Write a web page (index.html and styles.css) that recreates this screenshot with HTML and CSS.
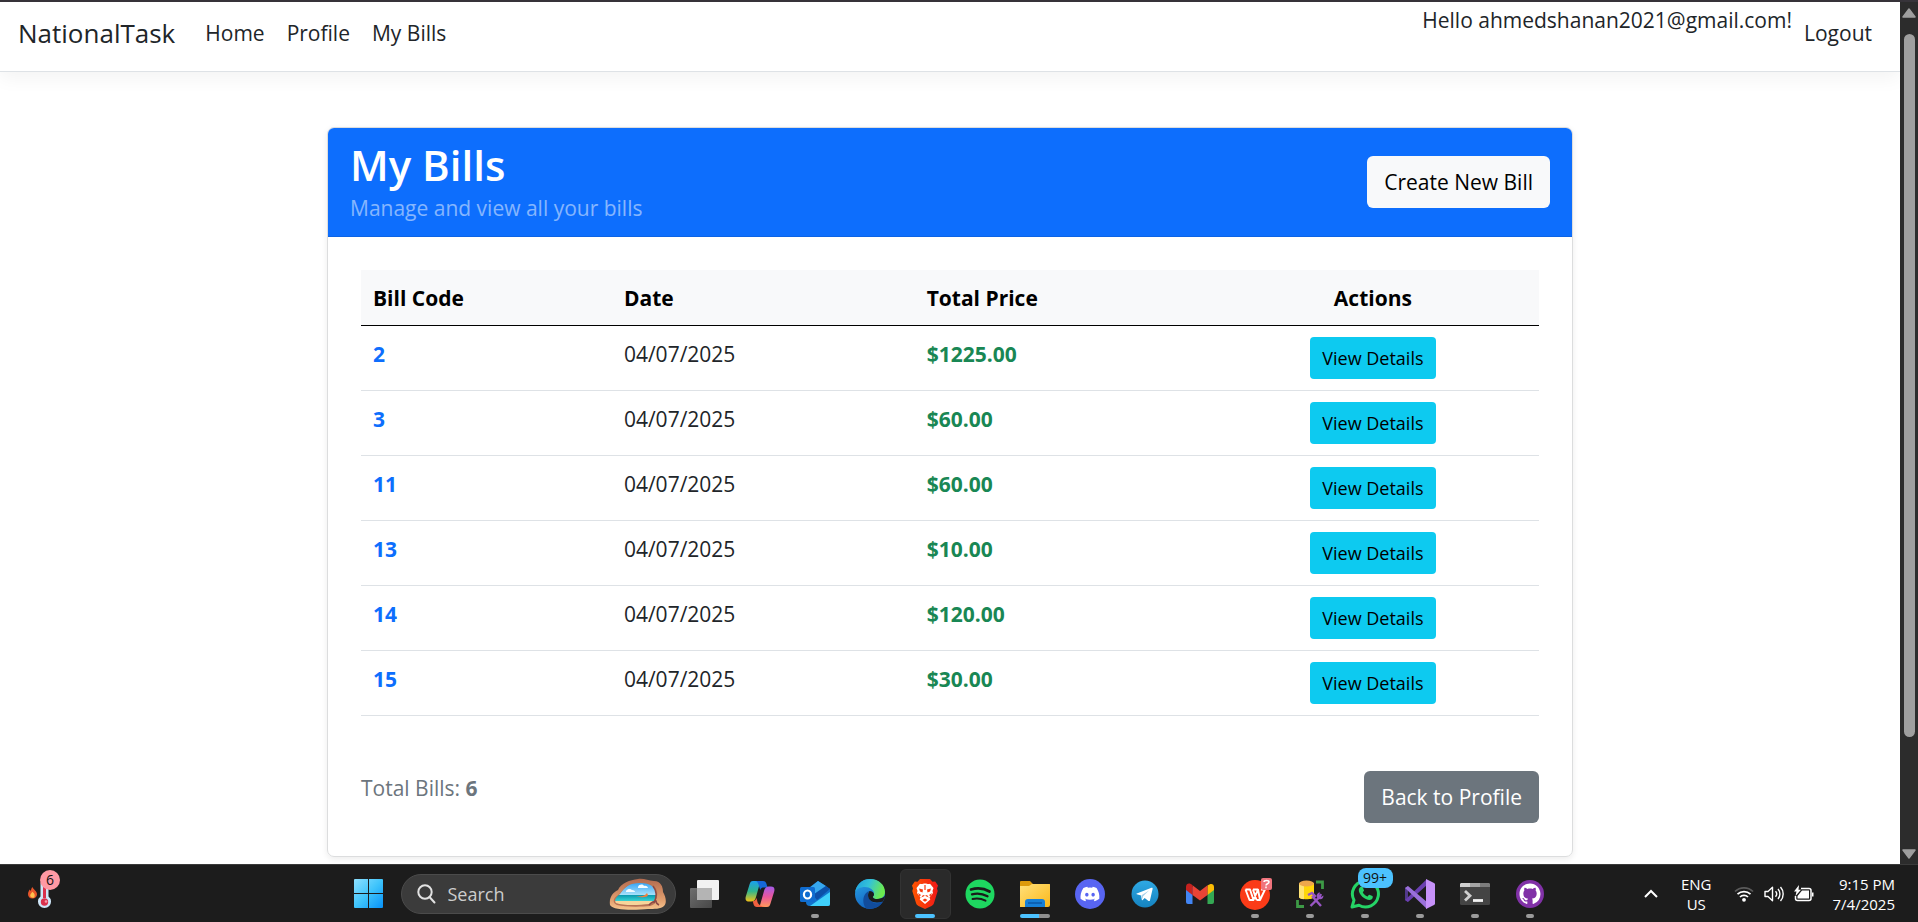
FILE: index.html
```html
<!DOCTYPE html>
<html lang="en">
<head>
<meta charset="utf-8">
<title>My Bills - NationalTask</title>
<link rel="stylesheet" href="styles.css">
</head>
<body>
<div class="viewport">
  <div class="page">
    <header class="navbar">
      <a class="brand" href="#">NationalTask</a>
      <nav class="nav-main">
        <a class="nav-link" href="#">Home</a>
        <a class="nav-link" href="#">Profile</a>
        <a class="nav-link" href="#">My Bills</a>
      </nav>
      <div class="nav-user">
        <span class="hello">Hello ahmedshanan2021@gmail.com!</span>
        <button class="nav-link logout" type="button">Logout</button>
      </div>
    </header>
    <main class="main">
      <section class="card">
        <div class="card-header">
          <div>
            <h1 class="card-title">My Bills</h1>
            <p class="card-subtitle">Manage and view all your bills</p>
          </div>
          <a class="btn btn-light" href="#">Create New Bill</a>
        </div>
        <div class="card-body">
          <table class="bills">
            <colgroup><col class="col-code"><col class="col-date"><col class="col-price"><col class="col-actions"></colgroup>
            <thead>
              <tr><th>Bill Code</th><th>Date</th><th>Total Price</th><th class="center">Actions</th></tr>
            </thead>
            <tbody>
              <tr><td class="code">2</td><td>04/07/2025</td><td class="price">$1225.00</td><td class="center"><a class="btn-info" href="#">View Details</a></td></tr>
              <tr><td class="code">3</td><td>04/07/2025</td><td class="price">$60.00</td><td class="center"><a class="btn-info" href="#">View Details</a></td></tr>
              <tr><td class="code">11</td><td>04/07/2025</td><td class="price">$60.00</td><td class="center"><a class="btn-info" href="#">View Details</a></td></tr>
              <tr><td class="code">13</td><td>04/07/2025</td><td class="price">$10.00</td><td class="center"><a class="btn-info" href="#">View Details</a></td></tr>
              <tr><td class="code">14</td><td>04/07/2025</td><td class="price">$120.00</td><td class="center"><a class="btn-info" href="#">View Details</a></td></tr>
              <tr><td class="code">15</td><td>04/07/2025</td><td class="price">$30.00</td><td class="center"><a class="btn-info" href="#">View Details</a></td></tr>
            </tbody>
          </table>
          <div class="card-foot">
            <p class="total">Total Bills: <strong>6</strong></p>
            <a class="btn btn-secondary" href="#">Back to Profile</a>
          </div>
        </div>
      </section>
    </main>
  </div>
  <div class="scrollbar" aria-hidden="true">
    <svg class="scroll-arrow" viewBox="0 0 14 10"><path d="M7 1 L13 9 H1 Z" fill="#9f9f9f" stroke="#9f9f9f" stroke-width="1.5" stroke-linejoin="round"/></svg>
    <div class="scroll-track"><div class="scroll-thumb"></div></div>
    <svg class="scroll-arrow" viewBox="0 0 14 10"><path d="M7 9 L13 1 H1 Z" fill="#9f9f9f" stroke="#9f9f9f" stroke-width="1.5" stroke-linejoin="round"/></svg>
  </div>
</div>

<footer class="taskbar">
  <div class="task-left">
    <button class="weather" type="button" aria-label="Weather">
      <svg width="26" height="30" viewBox="0 0 26 30">
        <path d="M4.500 19.500C1.500 19.500 0 17.500 0 15c0-2 1.200-3 1.500-4.500.8.500 1 1 1.200 1.600C3.200 10.500 3.500 9 4.500 8c.2 2 4.500 4 4.500 7.200 0 2.600-1.800 4.300-4.500 4.300z" fill="#e8562a"/>
        <path d="M4.800 18.800c-1.700 0-2.600-1-2.600-2.500s1.400-1.800 2-3.600c1.300 1 2.500 2 2.500 3.700 0 1.500-.6 2.400-1.900 2.400z" fill="#ffc04d"/>
        <path d="M12.500 5a4 4 0 0 1 8 0v12.500a6.500 6.500 0 1 1-8 0z" fill="#cfe6f8"/>
        <path d="M15 8h3v11h-3z" fill="#d9304c"/><circle cx="16.500" cy="23" r="3.700" fill="#d9304c"/><circle cx="18" cy="22.500" r="1.300" fill="#f79aa8"/>
      </svg>
      <span class="badge badge-pink">6</span>
    </button>
  </div>

  <div class="task-center">
    <button class="app" type="button" aria-label="Start">
      <svg width="29" height="29" viewBox="0 0 29 29"><defs><linearGradient id="win" x1="0" y1="0" x2="1" y2="1"><stop offset="0" stop-color="#8fe0ff"/><stop offset=".5" stop-color="#3fc4fb"/><stop offset="1" stop-color="#0791f8"/></linearGradient></defs><path fill="url(#win)" d="M1 0h13v14H0V1a1 1 0 0 1 1-1zM15 0h13a1 1 0 0 1 1 1v13H15zM0 15h14v14H1a1 1 0 0 1-1-1zM15 15h14v13a1 1 0 0 1-1 1H15z"/></svg>
    </button>
    <label class="search">
      <svg width="19" height="20" viewBox="0 0 19 20" fill="none" stroke="#e2e2e2" stroke-width="2"><circle cx="8" cy="8" r="6.700"/><path d="M12.500 13 L17.500 18.500" stroke-linecap="round"/></svg>
      <input class="search-input" type="text" placeholder="Search" aria-label="Search">
      <svg width="58" height="32" viewBox="0 0 58 32">
        <defs><linearGradient id="sky" x1="0" y1="0" x2="0" y2="1"><stop offset="0" stop-color="#38a5f3"/><stop offset=".55" stop-color="#a9e2fa"/><stop offset=".56" stop-color="#0b9bb0"/><stop offset=".8" stop-color="#35d0d0"/><stop offset=".82" stop-color="#f7d59b"/></linearGradient><linearGradient id="rock" x1="0" y1="0" x2="0" y2="1"><stop offset="0" stop-color="#b26a4f"/><stop offset=".7" stop-color="#e3a170"/><stop offset="1" stop-color="#f5c48e"/></linearGradient></defs>
        <path d="M1 27C0 20 3 15 9 12 12 5 21 2 29 1c6-1 10 2 16 2 7 0 9 6 9 11 3 5 4 11 1 14-3 3-10 3-16 3-11 1-35 2-38-4z" fill="url(#rock)"/>
        <path d="M8 27c-5-2-4-7 1-10 4-3 6-9 12-11 8-3 19-2 24 2 4 4 4 9 2 14 0 3-2 5-6 6-10 1-25 1-33-1z" fill="#b87455"/>
        <path d="M7 25c-2-3 0-6 4-9 3-4 6-8 12-10 8-2 16-1 20 2 4 4 5 8 3 12 0 3-2 5-6 6-9 1-25 2-33-1z" fill="url(#sky)"/>
        <path d="M17 13c2-3 5-2 6-1 2 0 3 1 3 2h-9zM29 9c1-3 5-3 6-1 2-1 4 1 4 2H29z" fill="#f4fbff"/>
        <path d="M27 18.500c4 0 7 0 9-1.500l2-2 1 2-1 1.500c-3 1-7 1-11 0z" fill="#f0803d"/>
        <path d="M44 8c4 5 4 11 1 17M40 27c3-3 5-4 7-4 0 2 1 3 3 4" fill="none" stroke="#8c4a45" stroke-width="1.500"/>
      </svg>
    </label>
    <button class="app" type="button" aria-label="Task view">
      <svg width="30" height="28" viewBox="0 0 30 28"><defs><linearGradient id="tv" x1="0" y1="0" x2="1" y2="1"><stop offset="0" stop-color="#6e6e6e"/><stop offset="1" stop-color="#474747"/></linearGradient></defs><rect x="0" y="8" width="22" height="20" rx="1" fill="url(#tv)"/><rect x="7" y="0" width="22" height="20" rx="1" fill="#f2f2f2"/><path d="M7 8h15v12H7z" fill="#b4b4b4"/></svg>
    </button>
    <button class="app" type="button" aria-label="Copilot">
      <svg width="30" height="28" viewBox="0 0 30 28"><defs><linearGradient id="cp1" x1="0" y1="0" x2="0" y2="1"><stop offset="0" stop-color="#1aa0f0"/><stop offset=".5" stop-color="#31b58d"/><stop offset="1" stop-color="#f3c316"/></linearGradient><linearGradient id="cp2" x1="0" y1="0" x2="0" y2="1"><stop offset="0" stop-color="#a45bea"/><stop offset=".5" stop-color="#e8569b"/><stop offset="1" stop-color="#ff9a5b"/></linearGradient></defs>
        <path d="M8 1h10c-2 0-3 1.500-3.500 3.500L11 17c-.8 3-2 4.500-5 4.500H4c-3 0-4-2-3.200-5L4.500 4.500C5.200 2 6 1 8 1z" fill="url(#cp1)"/>
        <path d="M10 1h8c2 0 3 1 3.500 3l1 3.500H19c-2 0-3 .5-3.800 2.500L14 6c-.7-3-1.500-5-4-5z" fill="#1668d8"/>
        <path d="M22 27H12c2 0 3-1.500 3.500-3.500L19 11c.8-3 2-4.500 5-4.500h2c3 0 4 2 3.200 5L25.500 23.500C24.800 26 24 27 22 27z" fill="url(#cp2)"/>
        <path d="M20 27h-8c-2 0-3-1-3.500-3l-.7-2.800c2 0 3-1.200 3.700-3.200L12.500 22c.7 3 5 5 7.500 5z" fill="#f0603f"/></svg>
    </button>
    <button class="app running" type="button" aria-label="Outlook">
      <svg width="30" height="28" viewBox="0 0 30 28"><path d="M6 10 L18 1 L30 9 V24a2 2 0 0 1-2 2H10a4 4 0 0 1-4-4z" fill="#1272cc"/><path d="M8 9 18 1l8 5-12 8z" fill="#36a7ee"/><path d="M13 15 26 6l4 3-13 11z" fill="#0c4fa8"/><path d="M10 26 L30 12v12a2 2 0 0 1-2 2z" fill="#3fd0fb"/><rect x="0" y="7" width="15" height="15" rx="1.500" fill="#0f6cd0"/><ellipse cx="7.500" cy="14.500" rx="3.600" ry="4" fill="none" stroke="#fff" stroke-width="2.200"/></svg>
    </button>
    <button class="app" type="button" aria-label="Edge">
      <svg width="30" height="30" viewBox="0 0 30 30"><defs><linearGradient id="ed1" x1="0" y1="0" x2="1" y2=".3"><stop offset="0" stop-color="#1b9de0"/><stop offset=".5" stop-color="#34c2d8"/><stop offset="1" stop-color="#6bea4f"/></linearGradient><linearGradient id="ed2" x1="0" y1="0" x2=".5" y2="1"><stop offset="0" stop-color="#2aa6e6"/><stop offset="1" stop-color="#1160c0"/></linearGradient></defs>
        <circle cx="15" cy="15" r="15" fill="url(#ed2)"/>
        <path d="M0 14C1 6 7 0 15 0c9 0 15 6 15 13 0 5-4 7-8 7-3 0-5-1-4-2.500 1-1 1-1.500 1-3C19 11 15 8 10 8 5 8 1 10 0 14z" fill="url(#ed1)"/>
        <path d="M11 29.400C7 25 7 15 14 12c-2 3-1 7 2 10 3 3 8 3 12 .5C25 28 18 31 11 29.400z" fill="#114c9c"/>
        <path d="M14.500 12c2.500 0 4.500 1.500 4.500 3.500 0 1-.5 1.500-1 2-.5 1.500 1.500 2.500 4 2.500 3 0 6-1 8.500-3.500l-2.500 6C23 24 18 24 15 21c-2.500-2.500-2.500-6.500-.5-9z" fill="#1c1c1c"/></svg>
    </button>
    <button class="app active" type="button" aria-label="Brave">
      <svg width="26" height="30" viewBox="0 0 26 30"><defs><linearGradient id="br" x1="0" y1="0" x2="1" y2="0"><stop offset="0" stop-color="#ff5500"/><stop offset="1" stop-color="#f21818"/></linearGradient></defs><path d="M8 0h10l2.500 2.700 2.700-.2L26 6.500l-1 3 .7 2.500L22 24c-.6 1.500-1 2-2.500 3L13 30l-6.500-3C5 26 4.600 25.500 4 24L.3 12 1 9.500 0 6.500l2.800-4 2.700.2z" fill="url(#br)"/><path d="M13 4.500c2 0 3 1 5 .3L21.500 9l-1 3 .5 2-3.500 4.500.8 2-5.300 4.500-5.300-4.500.8-2L5 14l.5-2-1-3L8 4.800c2 .7 3-.3 5-.3z" fill="#fff"/><path d="M7 9.500l4 1-.5 3L8 12.500zM19 9.500l-4 1 .5 3 2.500-1zM11 16l-1.800 2.500 3.800-1.700 3.800 1.700L15 16l-2 .8zM10.500 21l2.500-1.500 2.500 1.500-2.500 1.800zM12.400 6h1.200v5h-1.200zM6 14l3 2-1.500 1.500zM20 14l-3 2 1.500 1.500z" fill="#f93a10"/></svg>
    </button>
    <button class="app" type="button" aria-label="Spotify">
      <svg width="30" height="30" viewBox="0 0 30 30"><circle cx="15" cy="15" r="14.500" fill="#1ed760"/><g fill="none" stroke="#1a1a1a" stroke-linecap="round"><path d="M6 10.500c6-1.700 13-1.200 18.500 2" stroke-width="2.700"/><path d="M7 15.300c5-1.400 10.500-.8 15.500 2" stroke-width="2.300"/><path d="M7.500 20c4.500-1.100 8.700-.6 13 1.700" stroke-width="1.900"/></g></svg>
    </button>
    <button class="app grouped" type="button" aria-label="File Explorer">
      <svg width="30" height="27" viewBox="0 0 30 27"><defs><linearGradient id="fo" x1="0" y1="0" x2="1" y2="1"><stop offset="0" stop-color="#ffe07a"/><stop offset="1" stop-color="#fbb81a"/></linearGradient></defs><path d="M1 1h9l3 3H30v9H0V2a1 1 0 0 1 1-1z" fill="#dd9a0b"/><path d="M0 6h9l3-2h17a1 1 0 0 1 1 1v20a2 2 0 0 1-2 2H0z" fill="url(#fo)"/><path d="M5 27v-5a3 3 0 0 1 3-3h14a3 3 0 0 1 3 3v5z" fill="#1680d8"/><path d="M8 23h14" stroke="#0a58a8" stroke-width="1.500"/></svg>
    </button>
    <button class="app" type="button" aria-label="Discord">
      <svg width="30" height="30" viewBox="0 0 30 30"><circle cx="15" cy="15" r="15" fill="#5865f2"/><path transform="translate(5.500 5.500) scale(.79)" fill="#fff" d="M20.317 4.370a19.790 19.790 0 0 0-4.885-1.515c-.21.375-.46.880-.63 1.250a18.270 18.270 0 0 0-5.487 0c-.17-.38-.42-.875-.63-1.250A19.740 19.740 0 0 0 3.677 4.370C.533 9.046-.32 13.580.1 18.058c1.900 1.400 3.980 2.460 6.080 3.030.46-.63.870-1.295 1.226-1.994-.65-.25-1.270-.55-1.872-.892l.37-.29c3.930 1.793 8.180 1.793 12.060 0l.37.290c-.6.350-1.220.645-1.873.892.360.700.770 1.362 1.225 1.993 2.100-.57 4.200-1.630 6.100-3.030.5-5.177-.838-9.674-3.470-13.687zM8.020 15.330c-1.180 0-2.157-1.085-2.157-2.419 0-1.333.956-2.419 2.157-2.419 1.210 0 2.176 1.096 2.157 2.420 0 1.333-.956 2.418-2.157 2.418zm7.975 0c-1.183 0-2.157-1.085-2.157-2.419 0-1.333.955-2.419 2.157-2.419 1.210 0 2.176 1.096 2.157 2.420 0 1.333-.946 2.418-2.157 2.418z"/></svg>
    </button>
    <button class="app" type="button" aria-label="Telegram">
      <svg width="28" height="28" viewBox="0 0 28 28"><defs><linearGradient id="tg" x1="0" y1="0" x2="0" y2="1"><stop offset="0" stop-color="#2fa9e4"/><stop offset="1" stop-color="#1583c0"/></linearGradient></defs><circle cx="14" cy="14" r="13.500" fill="url(#tg)"/><path d="M5.800 13.500 20.500 7.800c.8-.3 1.300.2 1.100 1.100L19 20.300c-.2.900-.8 1-1.500.6l-3.800-2.800-2 1.900c-.4.400-.8.400-.9-.3l-.7-4.300-4.300-1.200c-.6-.2-.6-.5 0-.7z" fill="#fff"/><path d="M10.500 15.300l7.800-5-6.200 6-.6 3z" fill="#a9d2ea"/></svg>
    </button>
    <button class="app" type="button" aria-label="Gmail">
      <svg width="28" height="21" viewBox="0 0 28 21"><path d="M0 4h6.500v17H2a2 2 0 0 1-2-2z" fill="#4285f4"/><path d="M21.500 4H28v15a2 2 0 0 1-2 2h-4.500z" fill="#34a853"/><path d="M21.500 2.500C24 .500 28 0 28 4v3l-6.500 5z" fill="#fbbc04"/><path d="M6.500 12V2.300L14 8l7.500-5.700V12L14 17.500z" fill="#ea4335"/><path d="M0 7V4C0 0 4-.5 6.500 2.300V12z" fill="#c5221f"/></svg>
    </button>
    <button class="app running" type="button" aria-label="WPS Office">
      <svg width="34" height="32" viewBox="0 0 34 32"><circle cx="17" cy="17" r="15" fill="#fb3b18"/><path d="M7.500 11.500h4.500l3.500 10.500 4.500-10.500 2 10.500 5-10.500h-4M7.500 11.500l4 10.500h4M15 11.500h5M18.500 22h3.500M15 11.500l3.500 10.500" fill="none" stroke="#fff" stroke-width="1.900" stroke-linejoin="round"/><rect x="23" y="0" width="11" height="12" rx="2" fill="#f0747d"/><path d="M26 4c0-2 5-2 5 0s-3 1.500-3 3.500M28 8.500v1.800" stroke="#fff" stroke-width="1.500" fill="none"/></svg>
    </button>
    <button class="app running" type="button" aria-label="SQL Server Management Studio">
      <svg width="28" height="28" viewBox="0 0 28 28"><path d="M3 3v14c0 3 15 3 15 0V3z" fill="#ffd60a"/><path d="M3 3v14c0 1 2 2 5 2.200V3z" fill="#ffe477"/><ellipse cx="10.500" cy="3.500" rx="7.500" ry="3" fill="#eea84c"/><path d="M20 2h6.500v7M1.500 20v6.500H8" fill="none" stroke="#3d9a46" stroke-width="2.800"/><path d="M12 15l4-2 3 3-1.500 1.500M16 16l9 10M25 14l-1.500 3-9 9" fill="none" stroke="#9856c4" stroke-width="2.400"/><path d="M21 17.500c-1-3 1-5 3-5l-1 3 2 1.500 2.500-1.500c0 3-2 4.500-4.500 3.500z" fill="#9856c4"/></svg>
    </button>
    <button class="app running" type="button" aria-label="WhatsApp">
      <svg width="30" height="30" viewBox="0 0 30 30"><path d="M2 28l2-6.800A13 13 0 1 1 9 26.300z" fill="none" stroke="#25d366" stroke-width="3" stroke-linejoin="round"/><path d="M10.500 8c.7-.7 1.800-.5 2.200.3l1.300 2.900c.2.600-.8 1.500-1.200 2.100.9 2 2.500 3.400 4.600 4.200.6-.4 1.300-2 2-1.800l3 1.400c.8.500.3 2.500-.6 3.200-3.800 3-13.500-4-13-9.600.1-1 .7-2 1.700-2.700z" fill="#25d366"/></svg>
      <span class="badge badge-blue">99+</span>
    </button>
    <button class="app running" type="button" aria-label="Visual Studio">
      <svg width="30" height="30" viewBox="0 0 30 30"><path d="M0 9l3-2v16l-3-2z" fill="#52398c"/><path d="M3 23 22 6V0L0 21z" fill="#6a3fb0"/><path d="M3 7l19 16v7L0 9z" fill="#9a70da"/><path d="M21 0l8 4a2 2 0 0 1 1 2v18a2 2 0 0 1-1 2l-8 4z" fill="#c691f9"/></svg>
    </button>
    <button class="app running" type="button" aria-label="Terminal">
      <svg width="30" height="22" viewBox="0 0 30 22"><rect width="30" height="22" rx="1.500" fill="#444"/><path d="M1 0h9v4H0V1z" fill="#d0d0d0"/><path d="M10 0h10v4H10z" fill="#a5a5a5"/><path d="M20 0h9l1 1v3H20z" fill="#7c7c7c"/><path d="M5 8l5 4.700L5 17.500" fill="none" stroke="#cfcfcf" stroke-width="2.800"/><path d="M13 17.500h10" stroke="#f2f2f2" stroke-width="2.800"/></svg>
    </button>
    <button class="app running" type="button" aria-label="GitHub Desktop">
      <svg width="28" height="28" viewBox="0 0 28 28"><circle cx="14" cy="14" r="14" fill="#8131a7"/><path transform="translate(3.500 3.500) scale(1.310)" fill="#fff" d="M8 0C3.580 0 0 3.580 0 8c0 3.540 2.290 6.530 5.470 7.590.4.070.550-.170.550-.380 0-.190-.010-.820-.010-1.490-2.010.370-2.530-.490-2.690-.940-.090-.230-.480-.940-.820-1.130-.280-.150-.680-.520-.010-.530.630-.010 1.080.580 1.230.820.720 1.210 1.870.870 2.330.660.070-.520.280-.870.510-1.070-1.780-.200-3.640-.890-3.640-3.950 0-.870.310-1.590.820-2.150-.080-.200-.360-1.020.080-2.120 0 0 .670-.210 2.200.820.640-.180 1.320-.270 2-.270s1.360.090 2 .270c1.530-1.040 2.200-.820 2.200-.820.440 1.100.160 1.920.080 2.120.510.560.820 1.270.820 2.150 0 3.070-1.870 3.750-3.650 3.950.290.250.540.730.540 1.480 0 1.070-.010 1.930-.010 2.200 0 .210.150.460.550.380A8.010 8.010 0 0 0 16 8c0-4.420-3.580-8-8-8z"/></svg>
    </button>
  </div>

  <div class="task-right">
    <button class="tray" type="button" aria-label="Show hidden icons"><svg width="16" height="10" viewBox="0 0 16 10"><path d="M2 8l6-6 6 6" fill="none" stroke="#fff" stroke-width="2"/></svg></button>
    <button class="tray lang" type="button">ENG<br>US</button>
    <button class="tray status" type="button" aria-label="Network, volume and battery">
      <svg width="20" height="18" viewBox="0 0 20 18" fill="none" stroke-width="1.700"><path d="M1 6.500a13 13 0 0 1 18 0" stroke="#5a5a5a"/><path d="M3.500 9.200a9.300 9.300 0 0 1 13 0M6 12a5.600 5.600 0 0 1 8 0" stroke="#fff"/><circle cx="10" cy="14.800" r="1.900" fill="#fff"/></svg>
      <svg width="20" height="18" viewBox="0 0 20 18" fill="none" stroke="#fff" stroke-width="1.400"><path d="M1 6.500h3l4.500-4.200v13.400L4 11.500H1z" stroke-linejoin="round"/><path d="M11.500 6.300a4 4 0 0 1 0 5.400M14 4a7.500 7.500 0 0 1 0 10M16.500 2a10.500 10.500 0 0 1 0 14"/></svg>
      <svg width="20" height="18" viewBox="0 0 20 18"><path d="M7 3.500h8a2 2 0 0 1 2 2v8a2 2 0 0 1-2 2H3.500a2 2 0 0 1-2-2V11" fill="none" stroke="#fff" stroke-width="1.500"/><path d="M18 7.500h1.500v4H18zM8 5.500h7v8H3.500V11z" fill="#fff"/><path d="M5 0 0 6.500h2.500L1.500 11 7 4.800H4.500z" fill="#fff"/></svg>
    </button>
    <button class="tray clock" type="button">9:15 PM<br>7/4/2025</button>
  </div>
</footer>
</body>
</html>
```
FILE: styles.css
```css
* { box-sizing: border-box; }

body {
  margin: 0;
  min-height: 100vh;
  display: flex;
  flex-direction: column;
  background: #fff;
  color: #212529;
  font-family: "Open Sans", "Noto Sans", sans-serif;
  font-size: 21px;
  line-height: 34px;
}

a { color: inherit; text-decoration: none; }
button { font: inherit; color: inherit; background: none; border: 0; padding: 0; cursor: pointer; }
h1, p { margin: 0; }

.viewport {
  flex: 1;
  display: flex;
  border-top: 2px solid #37343a;
}
.page { flex: 1; min-width: 0; }

/* Navigation bar */
.navbar {
  display: flex;
  align-items: flex-start;
  height: 70px;
  padding: 1px 28px 0 18px;
  border-bottom: 1px solid #dee2e6;
  box-shadow: 0 6px 18px rgba(0, 0, 0, .05);
}
.brand { padding: 13px 0; margin-right: 30px; font-size: 26px; }
.nav-main { display: flex; gap: 22px; }
.nav-link { padding: 13px 0; }
.nav-user { display: flex; align-items: flex-start; gap: 12px; margin-left: auto; }

/* Bills card */
.main { padding: 55px 32px 4px; }
.card {
  max-width: 1246px;
  margin: 0 auto;
  border: 1px solid #dcddde;
  border-radius: 7px;
  box-shadow: 0 2px 6px rgba(0, 0, 0, .08);
}
.card-header {
  display: flex;
  align-items: center;
  justify-content: space-between;
  padding: 11px 22px;
  background: #0d6efd;
  border-bottom: 1px solid #0c63e4;
  border-radius: 6px 6px 0 0;
  color: #fff;
}
.card-title { font-size: 42px; font-weight: 600; line-height: 52px; }
.card-subtitle { color: rgba(255, 255, 255, .5); }
.card-body { padding: 33px; }

.btn {
  display: block;
  padding: 9px 17px;
  border-radius: 6px;
}
.btn-light { background: #f8f9fa; color: #000; }
.btn-secondary { background: #6c757d; color: #fff; }
.btn-info {
  display: inline-block;
  padding: 6px 12px;
  border-radius: 4px;
  background: #0dcaf0;
  color: #000;
  font-size: 18px;
  line-height: 30px;
  vertical-align: top;
}

.bills { width: 100%; table-layout: fixed; border-collapse: separate; border-spacing: 0; }
.col-code { width: 21.3%; }
.col-date { width: 25.7%; }
.col-price { width: 24.8%; }
.bills th, .bills td { text-align: left; vertical-align: top; padding: 11px 12px; }
.bills th { padding: 11px 12px 10px; background: #f8f9fa; color: #000; font-weight: 700; border-bottom: 1px solid #000; }
.bills td { border-bottom: 1px solid #dee2e6; }
.bills .center { text-align: center; }
.bills .code { color: #0d6efd; font-weight: 700; }
.bills .price { color: #198754; font-weight: 700; }

.card-foot {
  display: flex;
  align-items: flex-start;
  justify-content: space-between;
  margin-top: 55px;
  color: #6c757d;
}

/* Scrollbar */
.scrollbar {
  width: 18px;
  display: flex;
  flex-direction: column;
  align-items: center;
  gap: 16px;
  padding: 6px 0 5px;
  background: #2c2c2c;
}
.scroll-arrow { width: 14px; height: 10px; }
.scroll-track { flex: 1; }
.scroll-thumb { width: 11px; height: 88%; border-radius: 6px; background: #9f9f9f; }

/* Taskbar */
.taskbar {
  display: grid;
  grid-template-columns: 1fr auto 1fr;
  align-items: stretch;
  height: 58px;
  padding-right: 20px;
  background: #1c1c1c;
  border-top: 1px solid #3a3a3a;
  color: #fff;
  font-size: 15px;
  line-height: 20px;
}
.task-left { display: flex; align-items: center; padding-left: 28px; }
.weather { position: relative; display: flex; }
.task-center { display: flex; align-items: center; }
.app {
  position: relative;
  width: 55px;
  height: 50px;
  display: flex;
  align-items: center;
  justify-content: center;
}
.app::after {
  content: "";
  position: absolute;
  left: 50%;
  bottom: 1px;
  height: 4px;
  border-radius: 2px;
  transform: translateX(-50%);
}
.app.running::after { width: 8px; background: #9a9a9a; }
.app.active { width: 51px; margin: 0 2px; background: #2a2a2a; border: 1px solid #333; border-radius: 6px; }
.app.active::after { width: 20px; bottom: 0; background: #4cc2ff; }
.app.grouped::after { width: 30px; background: linear-gradient(90deg, #4cc2ff 62%, #8f8f8f 62%); }

.badge {
  position: absolute;
  height: 20px;
  border-radius: 10px;
  color: #111;
  font-size: 14px;
  line-height: 20px;
  text-align: center;
}
.badge-pink { left: 12px; top: -9px; width: 20px; background: #ff99a4; }
.badge-blue { left: 20px; top: -1px; width: 35px; background: #4cc2ff; border-radius: 8px; }

.search {
  display: flex;
  align-items: center;
  gap: 12px;
  width: 275px;
  height: 40px;
  margin: 0 2px 0 5px;
  padding: 0 8px 0 15px;
  background: #3b3b3b;
  border: 1px solid #4b4b4b;
  border-radius: 20px;
}
.search-input {
  flex: 1;
  min-width: 0;
  border: 0;
  padding: 0;
  background: none;
  color: #fff;
  font: inherit;
  font-size: 18px;
}
.search-input::placeholder { color: #cdcdcd; opacity: 1; }

.task-right { display: flex; align-items: center; justify-content: flex-end; padding-right: 3px; }
.tray { display: flex; align-items: center; }
.lang { display: block; margin: 0 22px; text-align: center; }
.status { gap: 10px; }
.clock { display: block; margin-left: 19px; text-align: right; }
```
